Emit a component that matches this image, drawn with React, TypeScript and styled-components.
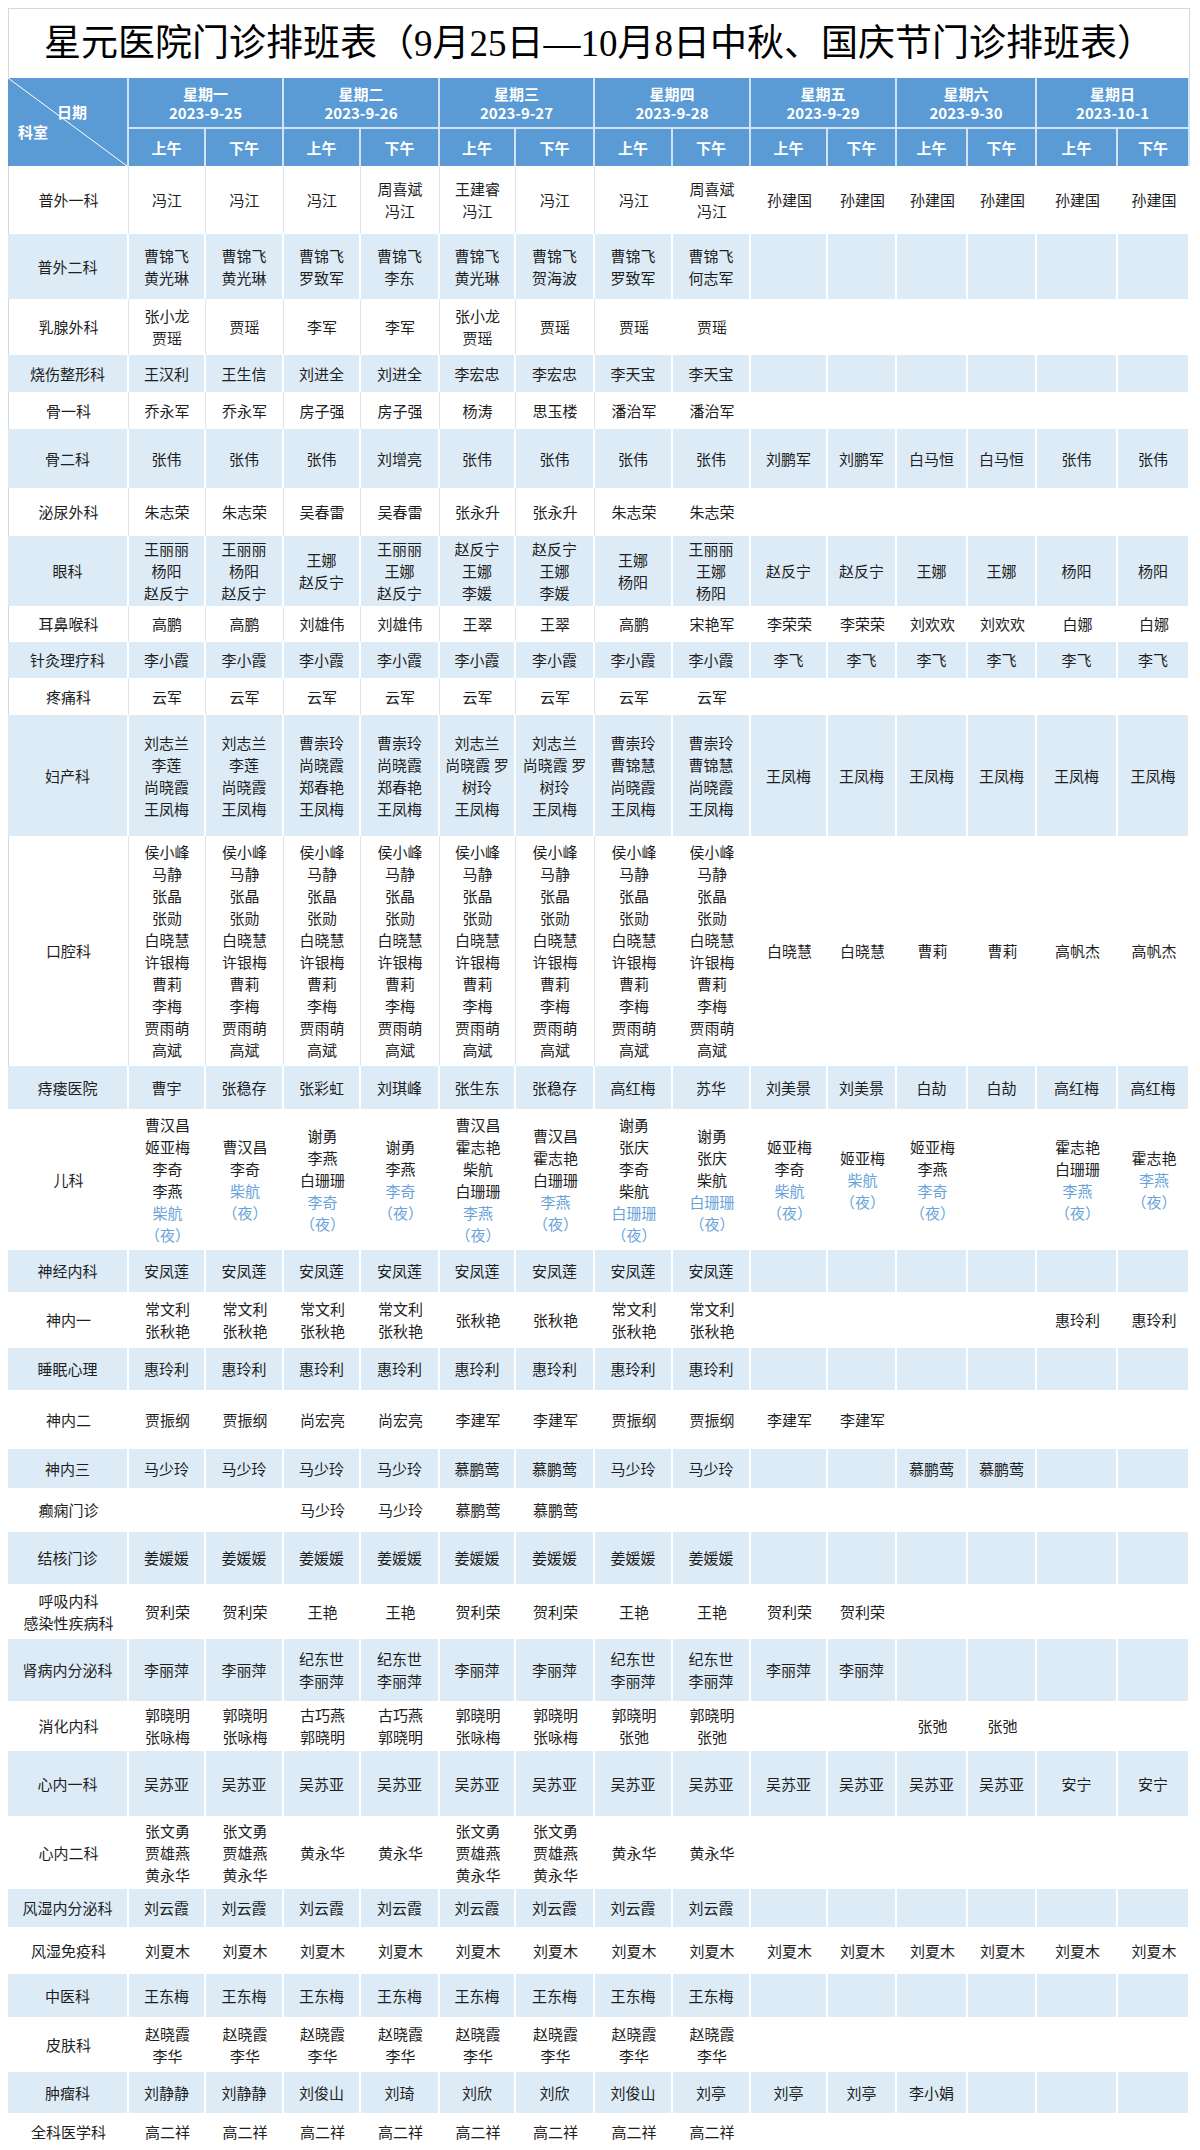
import React from "react";
import styled, { createGlobalStyle } from "styled-components";

const GlobalStyle = createGlobalStyle`
  html, body { padding: 0; background: #ffffff; }
  body {
    margin: 8px;
    font-family: "Noto Sans CJK SC", "Noto Sans", sans-serif;
    color: #1e1e1e;
  }
`;

const COLS = [121, 77, 78, 77, 79, 76, 79, 78, 78, 77, 69, 71, 69, 81, 72];

const DAYS = [
  ["星期一", "2023-9-25"],
  ["星期二", "2023-9-26"],
  ["星期三", "2023-9-27"],
  ["星期四", "2023-9-28"],
  ["星期五", "2023-9-29"],
  ["星期六", "2023-9-30"],
  ["星期日", "2023-10-1"],
];

type RowDef = { dept: string[]; h: number; lined?: boolean; cells: string[] };

const rep = (s: string, n: number): string[] => Array(n).fill(s);

const KQ = "侯小峰/马静/张晶/张勋/白晓慧/许银梅/曹莉/李梅/贾雨萌/高斌";

const ROWS: RowDef[] = [
  { dept: ["普外一科"], h: 68, lined: true, cells: ["冯江", "冯江", "冯江", "周喜斌/冯江", "王建睿/冯江", "冯江", "冯江", "周喜斌/冯江", ...rep("孙建国", 6)] },
  { dept: ["普外二科"], h: 65, cells: ["曹锦飞/黄光琳", "曹锦飞/黄光琳", "曹锦飞/罗致军", "曹锦飞/李东", "曹锦飞/黄光琳", "曹锦飞/贺海波", "曹锦飞/罗致军", "曹锦飞/何志军"] },
  { dept: ["乳腺外科"], h: 56, lined: true, cells: ["张小龙/贾瑶", "贾瑶", "李军", "李军", "张小龙/贾瑶", "贾瑶", "贾瑶", "贾瑶"] },
  { dept: ["烧伤整形科"], h: 37, cells: ["王汉利", "王生信", "刘进全", "刘进全", "李宏忠", "李宏忠", "李天宝", "李天宝"] },
  { dept: ["骨一科"], h: 37, lined: true, cells: ["乔永军", "乔永军", "房子强", "房子强", "杨涛", "思玉楼", "潘治军", "潘治军"] },
  { dept: ["骨二科"], h: 59, cells: ["张伟", "张伟", "张伟", "刘增亮", "张伟", "张伟", "张伟", "张伟", "刘鹏军", "刘鹏军", "白马恒", "白马恒", "张伟", "张伟"] },
  { dept: ["泌尿外科"], h: 48, lined: true, cells: ["朱志荣", "朱志荣", "吴春雷", "吴春雷", "张永升", "张永升", "朱志荣", "朱志荣"] },
  { dept: ["眼科"], h: 70, cells: ["王丽丽/杨阳/赵反宁", "王丽丽/杨阳/赵反宁", "王娜/赵反宁", "王丽丽/王娜/赵反宁", "赵反宁/王娜/李媛", "赵反宁/王娜/李媛", "王娜/杨阳", "王丽丽/王娜/杨阳", "赵反宁", "赵反宁", "王娜", "王娜", "杨阳", "杨阳"] },
  { dept: ["耳鼻喉科"], h: 36, lined: true, cells: ["高鹏", "高鹏", "刘雄伟", "刘雄伟", "王翠", "王翠", "高鹏", "宋艳军", "李荣荣", "李荣荣", "刘欢欢", "刘欢欢", "白娜", "白娜"] },
  { dept: ["针灸理疗科"], h: 36, cells: [...rep("李小霞", 8), ...rep("李飞", 6)] },
  { dept: ["疼痛科"], h: 37, lined: true, cells: rep("云军", 8) },
  { dept: ["妇产科"], h: 121, cells: [...rep("刘志兰/李莲/尚晓霞/王凤梅", 2), ...rep("曹崇玲/尚晓霞/郑春艳/王凤梅", 2), ...rep("刘志兰/尚晓霞 罗/树玲/王凤梅", 2), ...rep("曹崇玲/曹锦慧/尚晓霞/王凤梅", 2), ...rep("王凤梅", 6)] },
  { dept: ["口腔科"], h: 230, lined: true, cells: [...rep(KQ, 8), "白晓慧", "白晓慧", "曹莉", "曹莉", "高帆杰", "高帆杰"] },
  { dept: ["痔瘘医院"], h: 43, cells: ["曹宇", "张稳存", "张彩虹", "刘琪峰", "张生东", "张稳存", "高红梅", "苏华", "刘美景", "刘美景", "白劼", "白劼", "高红梅", "高红梅"] },
  {
    dept: ["儿科"], h: 141, cells: [
      "曹汉昌/姬亚梅/李奇/李燕/*柴航/*（夜）",
      "曹汉昌/李奇/*柴航/*（夜）",
      "谢勇/李燕/白珊珊/*李奇/*（夜）",
      "谢勇/李燕/*李奇/*（夜）",
      "曹汉昌/霍志艳/柴航/白珊珊/*李燕/*（夜）",
      "曹汉昌/霍志艳/白珊珊/*李燕/*（夜）",
      "谢勇/张庆/李奇/柴航/*白珊珊/*（夜）",
      "谢勇/张庆/柴航/*白珊珊/*（夜）",
      "姬亚梅/李奇/*柴航/*（夜）",
      "姬亚梅/*柴航/*（夜）",
      "姬亚梅/李燕/*李奇/*（夜）",
      "",
      "霍志艳/白珊珊/*李燕/*（夜）",
      "霍志艳/*李燕/*（夜）",
    ],
  },
  { dept: ["神经内科"], h: 42, cells: rep("安凤莲", 8) },
  { dept: ["神内一"], h: 56, cells: [...rep("常文利/张秋艳", 4), "张秋艳", "张秋艳", "常文利/张秋艳", "常文利/张秋艳", "", "", "", "", "惠玲利", "惠玲利"] },
  { dept: ["睡眠心理"], h: 42, cells: rep("惠玲利", 8) },
  { dept: ["神内二"], h: 59, cells: ["贾振纲", "贾振纲", "尚宏亮", "尚宏亮", "李建军", "李建军", "贾振纲", "贾振纲", "李建军", "李建军"] },
  { dept: ["神内三"], h: 39, cells: [...rep("马少玲", 4), "慕鹏莺", "慕鹏莺", "马少玲", "马少玲", "", "", "慕鹏莺", "慕鹏莺"] },
  { dept: ["癫痫门诊"], h: 44, cells: ["", "", "马少玲", "马少玲", "慕鹏莺", "慕鹏莺"] },
  { dept: ["结核门诊"], h: 52, cells: rep("姜媛媛", 8) },
  { dept: ["呼吸内科", "感染性疾病科"], h: 55, cells: ["贺利荣", "贺利荣", "王艳", "王艳", "贺利荣", "贺利荣", "王艳", "王艳", "贺利荣", "贺利荣"] },
  { dept: ["肾病内分泌科"], h: 62, cells: ["李丽萍", "李丽萍", "纪东世/李丽萍", "纪东世/李丽萍", "李丽萍", "李丽萍", "纪东世/李丽萍", "纪东世/李丽萍", "李丽萍", "李丽萍"] },
  { dept: ["消化内科"], h: 50, cells: [...rep("郭晓明/张咏梅", 2), ...rep("古巧燕/郭晓明", 2), ...rep("郭晓明/张咏梅", 2), ...rep("郭晓明/张弛", 2), "", "", "张弛", "张弛"] },
  { dept: ["心内一科"], h: 65, cells: [...rep("吴苏亚", 12), "安宁", "安宁"] },
  { dept: ["心内二科"], h: 73, cells: [...rep("张文勇/贾雄燕/黄永华", 2), "黄永华", "黄永华", ...rep("张文勇/贾雄燕/黄永华", 2), "黄永华", "黄永华"] },
  { dept: ["风湿内分泌科"], h: 38, cells: rep("刘云霞", 8) },
  { dept: ["风湿免疫科"], h: 47, cells: rep("刘夏木", 14) },
  { dept: ["中医科"], h: 43, cells: rep("王东梅", 8) },
  { dept: ["皮肤科"], h: 55, cells: rep("赵晓霞/李华", 8) },
  { dept: ["肿瘤科"], h: 41, cells: ["刘静静", "刘静静", "刘俊山", "刘琦", "刘欣", "刘欣", "刘俊山", "刘亭", "刘亭", "刘亭", "李小娟"] },
  { dept: ["全科医学科"], h: 38, cells: rep("高二祥", 8) },
];

const HEAD_BLUE = "#5b9bd5";
const HEAD_LINE = "#d4e3f4";
const ROW_BLUE = "#ddebf7";
const GRID_LINE = "#dde4ec";
const FRAME = "#d3d9e1";

const Sheet = styled.table`
  width: 1182px;
  table-layout: fixed;
  border-collapse: separate;
  border-spacing: 0;
  font-family: "Noto Sans CJK SC", "Noto Sans", sans-serif;
  font-size: 15px;
  line-height: 22px;
  color: #1e1e1e;
`;

const Col = styled.col<{ $w: number }>`
  width: ${(p) => p.$w}px;
`;

const TitleCell = styled.th`
  height: 69px;
  padding: 0;
  border-top: 1px solid ${FRAME};
  border-left: 1px solid ${FRAME};
  border-right: 1px solid ${FRAME};
  background: #ffffff;
  text-align: center;
  vertical-align: middle;
  font-family: "Liberation Serif", "Noto Sans CJK SC", serif;
  font-size: 37px;
  font-weight: 400;
  line-height: 44px;
  color: #000000;
`;

const HeadRow = styled.tr<{ $h: number }>`
  height: ${(p) => p.$h}px;
`;

const HeadBase = styled.th`
  padding: 0;
  background: ${HEAD_BLUE};
  color: #ffffff;
  font-weight: 700;
  font-size: 15px;
  line-height: 19px;
  text-align: center;
  vertical-align: middle;
`;

const CornerCell = styled(HeadBase)`
  border-right: 2px solid ${HEAD_LINE};
  background: linear-gradient(
    to top right,
    ${HEAD_BLUE} calc(50% - 0.8px),
    #ffffff 50%,
    ${HEAD_BLUE} calc(50% + 0.8px)
  );
`;

const CornerLabels = styled.div`
  display: flex;
  flex-direction: column;
  line-height: 20px;
`;

const CornerTop = styled.span`
  align-self: flex-end;
  margin-right: 40px;
`;

const CornerBottom = styled.span`
  align-self: flex-start;
  margin-left: 10px;
`;

const DayHead = styled(HeadBase)`
  border-right: 2px solid ${HEAD_LINE};
  border-bottom: 2px solid ${HEAD_LINE};
`;

const HalfHead = styled(HeadBase)`
  border-right: 2px solid ${HEAD_LINE};
`;

const HeadLine = styled.span`
  display: block;
`;

const Row = styled.tr<{ $h: number }>`
  height: ${(p) => p.$h}px;
`;

const Cell = styled.td<{ $blue: boolean; $line: boolean; $edge?: boolean }>`
  padding: 0 1px;
  text-align: center;
  vertical-align: middle;
  white-space: nowrap;
  background: ${(p) => (p.$blue ? ROW_BLUE : "#ffffff")};
  border-right: ${(p) =>
    p.$blue ? "2px solid #ffffff" : p.$line ? `1px solid ${GRID_LINE}` : "none"};
  border-left: ${(p) => (p.$edge ? `1px solid ${FRAME}` : "none")};
`;

const DeptCell = styled(Cell)`
  color: #1e1e1e;
`;

const Line = styled.span<{ $night?: boolean }>`
  display: block;
  color: ${(p) => (p.$night ? "#6aa3da" : "#1e1e1e")};
`;

function CellLines({ text }: { text: string }) {
  if (!text) return null;
  return (
    <>
      {text.split("/").map((t, i) =>
        t.startsWith("*") ? (
          <Line key={i} $night>
            {t.slice(1)}
          </Line>
        ) : (
          <Line key={i}>{t}</Line>
        )
      )}
    </>
  );
}

export default function App() {
  return (
    <>
      <GlobalStyle />
      <Sheet>
        <colgroup>
          {COLS.map((w, i) => (
            <Col key={i} $w={w} />
          ))}
        </colgroup>
        <thead>
          <tr>
            <TitleCell colSpan={15}>
              星元医院门诊排班表（9月25日—10月8日中秋、国庆节门诊排班表）
            </TitleCell>
          </tr>
          <HeadRow $h={51}>
            <CornerCell rowSpan={2}>
              <CornerLabels>
                <CornerTop>日期</CornerTop>
                <CornerBottom>科室</CornerBottom>
              </CornerLabels>
            </CornerCell>
            {DAYS.map(([d, date]) => (
              <DayHead key={d} colSpan={2}>
                <HeadLine>{d}</HeadLine>
                <HeadLine>{date}</HeadLine>
              </DayHead>
            ))}
          </HeadRow>
          <HeadRow $h={37}>
            {DAYS.map(([d]) => (
              <React.Fragment key={d}>
                <HalfHead>上午</HalfHead>
                <HalfHead>下午</HalfHead>
              </React.Fragment>
            ))}
          </HeadRow>
        </thead>
        <tbody>
          {ROWS.map((r, ri) => {
            const blue = ri % 2 === 1;
            const lined = !!r.lined;
            const cells = Array.from({ length: 14 }, (_, i) => r.cells[i] ?? "");
            return (
              <Row key={ri} $h={r.h}>
                <DeptCell $blue={blue} $line={lined} $edge={lined}>
                  {r.dept.map((d, i) => (
                    <Line key={i}>{d}</Line>
                  ))}
                </DeptCell>
                {cells.map((c, ci) => (
                  <Cell key={ci} $blue={blue} $line={lined && ci < 6}>
                    <CellLines text={c} />
                  </Cell>
                ))}
              </Row>
            );
          })}
        </tbody>
      </Sheet>
    </>
  );
}
